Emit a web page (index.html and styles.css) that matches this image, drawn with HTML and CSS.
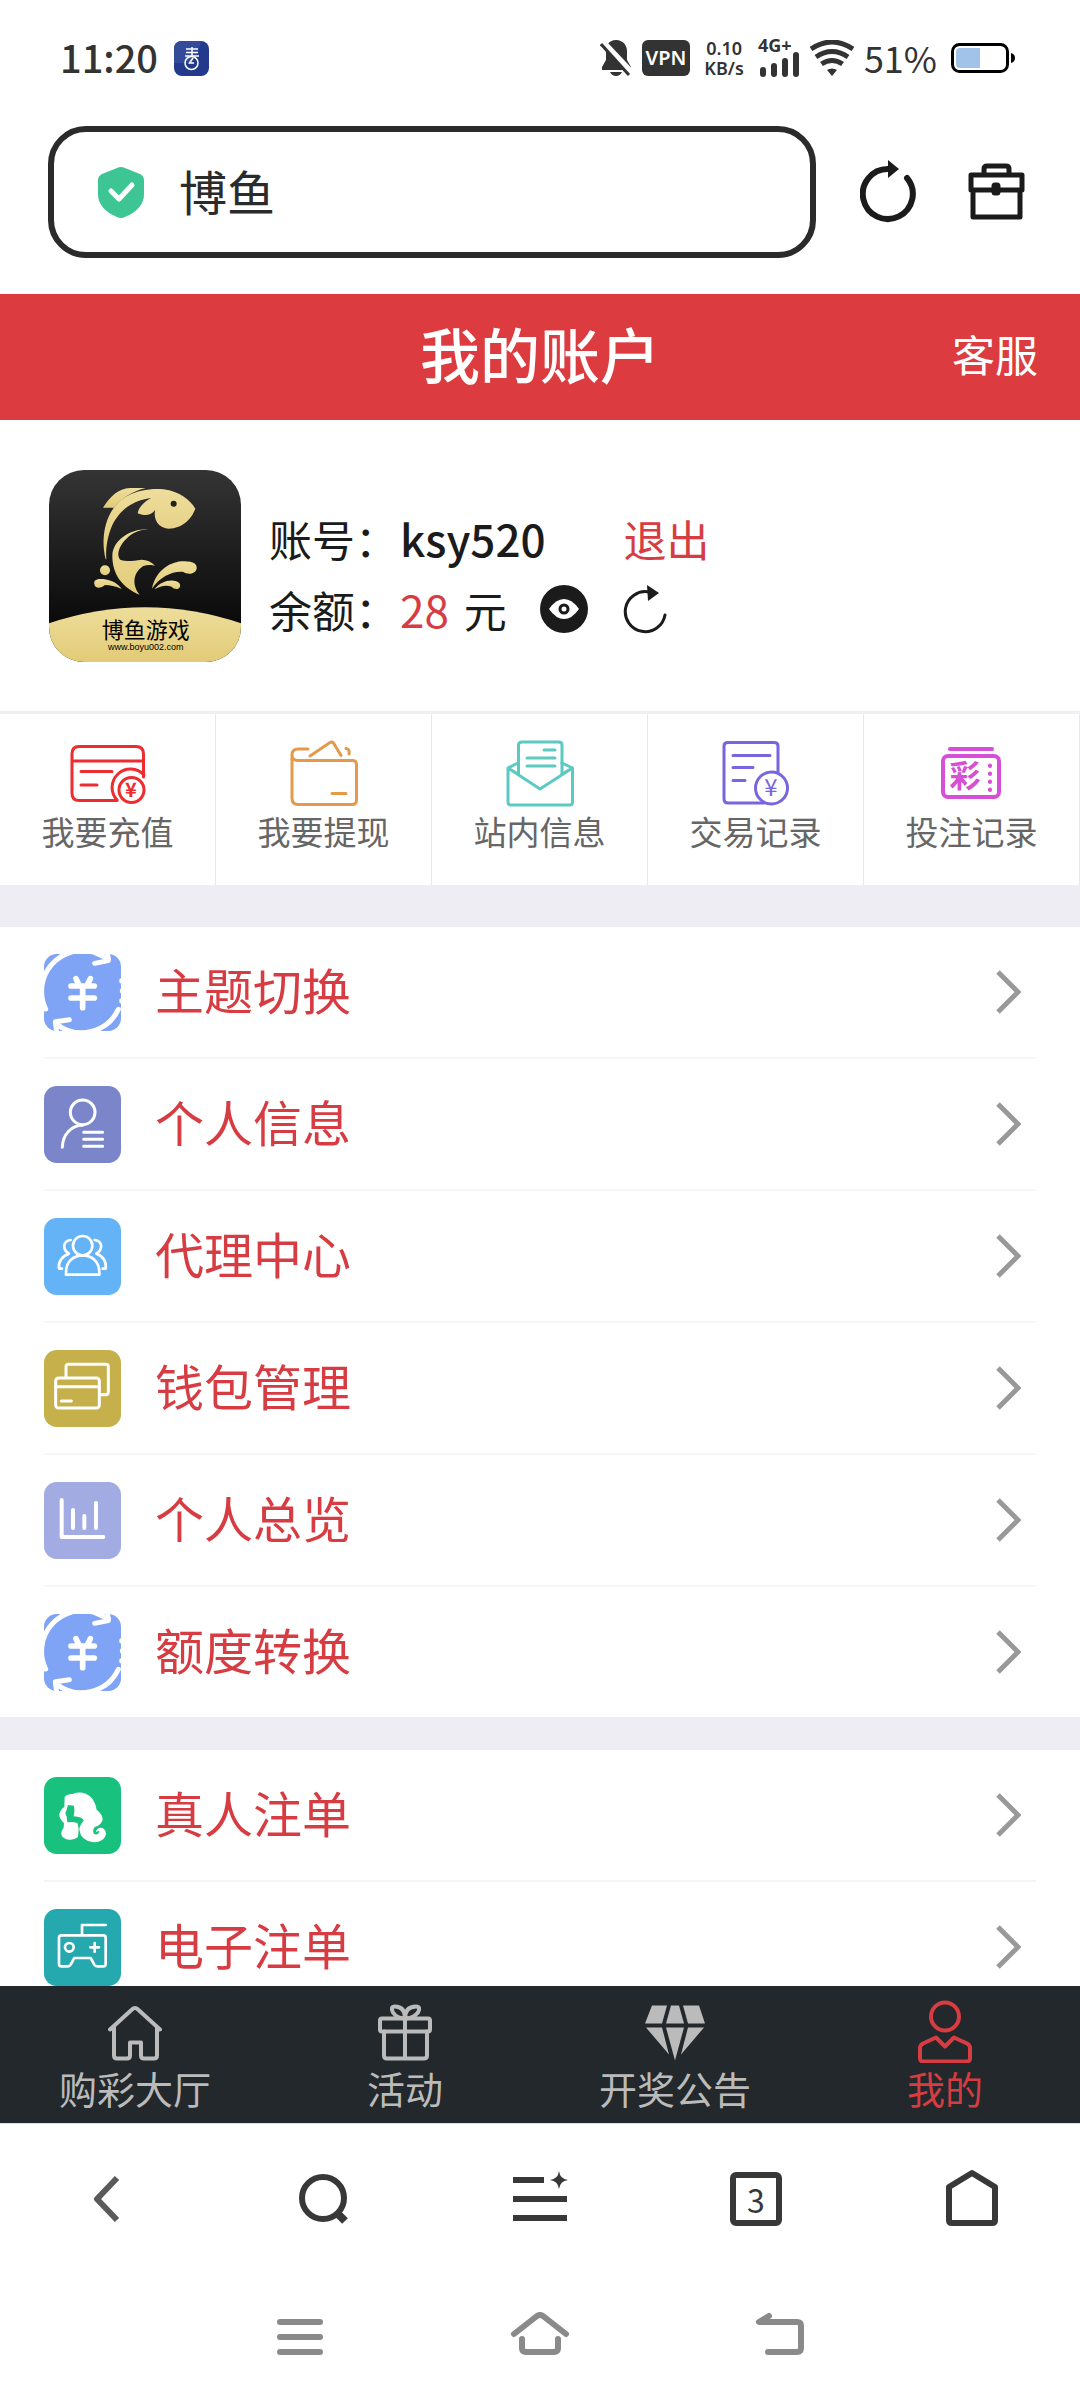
FILE: index.html
```html
<!DOCTYPE html>
<html lang="zh-CN">
<head>
    <meta charset="UTF-8">
    <meta name="viewport" content="width=device-width, initial-scale=1.0">
    <title>我的账户</title>
    <link rel="stylesheet" href="styles.css">
</head>
<body>
    <div class="status-bar">
        <span class="clock">11:20</span>
        <svg class="app-badge" viewBox="0 0 35 35">
            <rect width="35" height="35" rx="8" fill="#233a8c"/>
            <path d="M0 22V8Q0 0 8 0H27L24 12L17 22Z" fill="#334b98"/>
            <path d="M12 8H24M12 11.500H24M11 15H25M18 6V15" stroke="#fff" stroke-width="1.500"/>
            <circle cx="17.500" cy="22" r="6.500" fill="none" stroke="#fff" stroke-width="1.500"/>
            <path d="M19 17L15.500 22H20" fill="none" stroke="#fff" stroke-width="1.500"/>
        </svg>
        <div class="status-icons">
            <svg class="bell" viewBox="0 0 32 36" fill="#333">
                <path d="M16 0C23 0 27 5 27 11V20L31 27V30H2V27L6 20V11C6 5 9 0 16 0Z"/>
                <path d="M10 32H22Q20 36 16 36Q12 36 10 32Z"/>
                <path d="M2 1L32 33" stroke="#fff" stroke-width="6"/>
                <path d="M1 4L29 35" stroke="#333" stroke-width="3"/>
            </svg>
            <span class="vpn">VPN</span>
            <span class="speed">
                <span>0.10</span>
                <span>KB/s</span>
            </span>
            <span class="signal">
                <span>4G+</span>
                <svg viewBox="0 0 42 26" stroke="#333" stroke-width="6" stroke-linecap="round">
                    <path d="M5 19V23M16 15V23M27 10V23M38 4V23"/>
                </svg>
            </span>
            <svg class="wifi" viewBox="0 0 44 36" fill="none" stroke="#333" stroke-width="5">
                <path d="M1 9Q22 -5 43 9M6 17Q22 6 38 17M11.500 24Q22 17 32.500 24"/>
                <path d="M17 30Q22 27 27 30L22 36Z" fill="#333" stroke="none"/>
            </svg>
            <span class="percent">51%</span>
            <svg class="battery" viewBox="0 0 65 32">
                <rect x="1.500" y="2.500" width="55" height="27" rx="7" fill="#fff" stroke="#000" stroke-width="3"/>
                <path d="M9 6H29V26H9Q5 26 5 22V10Q5 6 9 6Z" fill="#a2c3e9"/>
                <path d="M60 11Q64 12 64 16Q64 20 60 21Z"/>
            </svg>
        </div>
    </div>

    <div class="address-bar">
        <div class="address-box">
            <svg class="shield" viewBox="0 0 46 52">
                <path d="M19 2Q23 0 27 2L42 8Q46 10 46 14V28Q46 43 27 51Q23 53 19 51Q0 43 0 28V14Q0 10 4 8Z" fill="#3dc593"/>
                <path d="M13 25L21 33L34 19" fill="none" stroke="#fff" stroke-width="5" stroke-linecap="round" stroke-linejoin="round"/>
            </svg>
            <input class="address-input" type="text" value="博鱼" aria-label="地址栏">
        </div>
        <button class="icon-btn" aria-label="刷新">
            <svg width="56" height="64" viewBox="0 0 56 64">
                <path d="M28 9A25 25 0 1 0 47 18" fill="none" stroke="#1b1b1b" stroke-width="6" stroke-linecap="round"/>
                <path d="M28 0L39 9L28 18Z" fill="#1b1b1b"/>
            </svg>
        </button>
        <button class="icon-btn" aria-label="工具箱">
            <svg width="58" height="60" viewBox="0 0 58 60" fill="none" stroke="#1b1b1b" stroke-width="5" stroke-linejoin="round">
                <path d="M16 12V7Q16 4 19 4H38Q41 4 41 7V12M3 28V13H54V28ZM5 28V55H52V28"/>
                <rect x="26" y="23" width="4" height="8" rx="1"/>
            </svg>
        </button>
    </div>

    <header class="page-header">
        <h1>我的账户</h1>
        <a href="#service">客服</a>
    </header>

    <main>
        <section class="profile">
            <svg class="avatar" viewBox="57 30 576 576">
                <defs>
                    <linearGradient id="dark" x1="0" y1="0" x2="0" y2="1">
                        <stop offset="0" stop-color="#343434"/>
                        <stop offset="0.800" stop-color="#0a0a0a"/>
                    </linearGradient>
                    <linearGradient id="gold" x1="0" y1="0" x2="0" y2="1">
                        <stop offset="0" stop-color="#eedd9c"/>
                        <stop offset="1" stop-color="#e2cb77"/>
                    </linearGradient>
                    <clipPath id="avatar-clip"><rect x="57" y="30" width="576" height="576" rx="105"/></clipPath>
                </defs>
                <g clip-path="url(#avatar-clip)">
                    <rect x="57" y="30" width="576" height="576" fill="url(#dark)"/>
                    <path d="M57 490Q346 394 633 490V606H57Z" fill="url(#gold)"/>
                    <g fill="url(#gold)">
                        <path d="M219 143C240 110 265 85 300 84H347C310 92 275 115 252 143Z"/>
                        <path d="M227 298C210 225 228 150 285 112C325 88 370 85 400 88C450 94 480 120 496 146C485 175 460 205 415 206C385 203 370 180 375 150C365 165 345 170 323 160C325 145 340 125 364 114C310 120 265 150 243 205C230 240 227 270 229 298Z"/>
                        <path d="M355 208C300 206 250 240 247 285C246 345 280 385 329 404C308 380 305 340 340 318C355 313 368 316 375 317C365 305 350 299 335 299C310 302 290 306 272 300C255 285 270 245 310 220C325 212 340 209 355 208Z"/>
                        <circle cx="225" cy="331" r="15"/>
                        <path d="M193 372C190 358 205 355 225 358C250 362 268 375 275 387C255 378 240 375 225 375C215 384 195 388 193 372Z"/>
                        <path d="M366 386C375 340 410 308 455 304C490 302 502 312 500 326C496 342 475 345 460 336C430 332 390 350 366 386Z"/>
                        <path d="M373 388C390 368 410 360 430 362C448 364 452 372 450 380C446 390 432 388 425 380C405 374 390 380 373 388Z"/>
                    </g>
                    <circle cx="431" cy="131" r="9" fill="#222"/>
                    <text class="logo-name" x="347" y="534">博鱼游戏</text>
                    <text class="logo-url" x="347" y="569">www.boyu002.com</text>
                </g>
            </svg>
            <div class="account">
                <div class="account-row">
                    <span class="account-label">账号：</span>
                    <span class="account-name">ksy520</span>
                    <a class="logout" href="#logout">退出</a>
                </div>
                <div class="account-row">
                    <span class="account-label">余额：</span>
                    <span class="balance">28</span>
                    <span class="unit">元</span>
                    <button class="icon-btn eye" aria-label="显示余额">
                        <svg width="50" height="50" viewBox="0 0 50 50">
                            <circle cx="25" cy="25" r="24" fill="#1b1b1b"/>
                            <path d="M10 25Q17 15 25 15Q33 15 40 25Q33 35 25 35Q17 35 10 25Z" fill="#fff"/>
                            <circle cx="25" cy="25" r="4" fill="#fff" stroke="#1b1b1b" stroke-width="3"/>
                        </svg>
                    </button>
                    <button class="icon-btn" aria-label="刷新余额">
                        <svg width="44" height="50" viewBox="0 0 44 50">
                            <path d="M26 8A20 20 0 1 0 42 31" fill="none" stroke="#1b1b1b" stroke-width="3" stroke-linecap="round"/>
                            <path d="M24 1L36 9L25 17Z" fill="#1b1b1b"/>
                        </svg>
                    </button>
                </div>
            </div>
        </section>

        <nav class="quick-nav">
            <a href="#recharge">
                <svg viewBox="0 0 76 72" fill="none" stroke="#ee2b2e" stroke-width="3" stroke-linecap="round">
                    <path d="M73.500 39V16Q73.500 8.500 66 8.500H9Q2 8.500 2 16V55Q2 62.500 9 62.500H47M2 23H73M11 33.500H42M11 47H27"/>
                    <path d="M47 62A18 18 0 0 1 74 37"/>
                    <circle cx="61.500" cy="52" r="12.500"/>
                    <text class="coin coin-red" x="61" y="59">¥</text>
                </svg>
                <span>我要充值</span>
            </a>
            <a href="#withdraw">
                <svg viewBox="0 0 76 72" fill="none" stroke="#e59a4b" stroke-width="3" stroke-linecap="round" stroke-linejoin="round">
                    <path d="M22 11H12Q6 11 6 17Q6 22.500 12 22.500H67Q70.500 22.500 70.500 27V62Q70.500 66.500 66 66.500H12Q6 66.500 6 60V17"/>
                    <path d="M24 18L44 4.500Q46 3.500 47.500 5L55 17.500M60 10.500Q64 11 63 16M46 55.500H60"/>
                </svg>
                <span>我要提现</span>
            </a>
            <a href="#message">
                <svg viewBox="0 0 76 72" fill="none" stroke="#5cc9c2" stroke-width="3" stroke-linecap="round" stroke-linejoin="round">
                    <path d="M16.500 36V7Q16.500 4 20 4H57Q60 4 60 7V36M42 12H53M25 20H53M25 28H53"/>
                    <path d="M16 25L6 30V64Q6 67 9 67H68Q70.500 67 70.500 64V30L60 25M6 30L38 51L70.500 30M6 30L16 36M70.500 30L60 36"/>
                </svg>
                <span>站内信息</span>
            </a>
            <a href="#trades">
                <svg viewBox="0 0 76 72" fill="none" stroke="#7965de" stroke-width="3" stroke-linecap="round">
                    <path d="M60 34V8Q60 4.500 56 4.500H10Q6 4.500 6 8V61Q6 65 10 65H46M15 17.500H52M15 29.500H35M15 42.500H27"/>
                    <circle cx="53.500" cy="50" r="16"/>
                    <text class="coin coin-purple" x="53" y="58">¥</text>
                </svg>
                <span>交易记录</span>
            </a>
            <a href="#bets">
                <svg viewBox="0 0 76 72" fill="none" stroke="#d64fd6" stroke-width="4" stroke-linecap="round">
                    <path d="M16 11H58"/>
                    <rect x="9" y="18" width="56" height="41" rx="5"/>
                    <path d="M56 27.500V28M56 35.500V36M56 43.500V44M56 51.500V52"/>
                    <text class="ticket" x="31" y="49">彩</text>
                </svg>
                <span>投注记录</span>
            </a>
        </nav>

        <ul class="menu">
            <li><a href="#theme">
                <svg class="menu-icon" viewBox="0 0 231 231">
                    <defs><clipPath id="tile"><rect width="231" height="231" rx="38"/></clipPath></defs>
                    <g id="exchange" clip-path="url(#tile)">
                        <rect width="231" height="231" fill="#7fa3f5"/>
                        <g fill="none" stroke="#fff" stroke-width="15" stroke-linecap="round" stroke-linejoin="round">
                            <path d="M5 165A122 122 0 0 1 150 -5L193 14"/>
                            <path d="M152 28L193 20L190 -10"/>
                            <path d="M223 166A122 122 0 0 1 40 212"/>
                            <path d="M76 197L34 203L38 236"/>
                            <path d="M233 80V81M235 110V111M233 140V141"/>
                        </g>
                        <path d="M96 74L105 93M139 74L130 93M81 96H151M81 132H151M116 98V161" fill="none" stroke="#fff" stroke-width="17" stroke-linecap="round"/>
                    </g>
                </svg>
                <span>主题切换</span>
                <svg class="chevron" viewBox="0 0 26 46"><path d="M3 3L23 23L3 43"/></svg>
            </a></li>
            <li><a href="#info">
                <svg class="menu-icon" viewBox="0 0 231 231">
                    <rect width="231" height="231" rx="38" fill="#7a86c9"/>
                    <g fill="none" stroke="#fff" stroke-width="9" stroke-linecap="round">
                        <circle cx="116" cy="79" r="37"/>
                        <path d="M55 184C56 145 82 118 116 118M119 139H176M119 160H176M119 181H176"/>
                    </g>
                </svg>
                <span>个人信息</span>
                <svg class="chevron" viewBox="0 0 26 46"><path d="M3 3L23 23L3 43"/></svg>
            </a></li>
            <li><a href="#agent">
                <svg class="menu-icon" viewBox="0 0 231 231">
                    <rect width="231" height="231" rx="38" fill="#64b3f7"/>
                    <g fill="none" stroke="#fff" stroke-width="8" stroke-linecap="round" stroke-linejoin="round">
                        <circle cx="116" cy="83" r="29"/>
                        <path d="M66 170V163C66 95 166 95 166 163V170Z"/>
                        <path d="M80 66C56 70 54 94 75 107C54 114 42 132 45 152H54"/>
                        <path d="M152 66C176 70 178 94 157 107C178 114 188 132 185 152H176"/>
                    </g>
                </svg>
                <span>代理中心</span>
                <svg class="chevron" viewBox="0 0 26 46"><path d="M3 3L23 23L3 43"/></svg>
            </a></li>
            <li><a href="#wallet">
                <svg class="menu-icon" viewBox="0 0 231 231">
                    <rect width="231" height="231" rx="38" fill="#c5b04b"/>
                    <g fill="none" stroke="#fff" stroke-width="9" stroke-linecap="round">
                        <rect x="35" y="84" width="131" height="90" rx="9"/>
                        <path d="M35 110H166M52 153H82"/>
                        <path d="M66 82V51Q66 43 74 43H186Q193 43 193 51V126Q193 134 186 134H170"/>
                    </g>
                </svg>
                <span>钱包管理</span>
                <svg class="chevron" viewBox="0 0 26 46"><path d="M3 3L23 23L3 43"/></svg>
            </a></li>
            <li><a href="#overview">
                <svg class="menu-icon" viewBox="0 0 231 231">
                    <rect width="231" height="231" rx="38" fill="#a2abe2"/>
                    <path d="M53 54V165H178M87 84V138M121 102V138M156 63V138" fill="none" stroke="#fff" stroke-width="12" stroke-linecap="round" stroke-linejoin="round"/>
                </svg>
                <span>个人总览</span>
                <svg class="chevron" viewBox="0 0 26 46"><path d="M3 3L23 23L3 43"/></svg>
            </a></li>
            <li><a href="#transfer">
                <svg class="menu-icon" viewBox="0 0 231 231"><use href="#exchange"/></svg>
                <span>额度转换</span>
                <svg class="chevron" viewBox="0 0 26 46"><path d="M3 3L23 23L3 43"/></svg>
            </a></li>
        </ul>

        <ul class="menu">
            <li><a href="#live">
                <svg class="menu-icon" viewBox="0 0 231 231">
                    <rect width="231" height="231" rx="38" fill="#18c17e"/>
                    <path d="M62 60Q66 52 86 51Q105 43 125 50Q152 60 158 98Q176 112 176 128Q172 144 152 150Q144 160 150 171Q164 176 166 163Q160 160 155 167Q158 150 176 153Q190 162 184 178Q175 196 148 196Q110 190 106 158Q106 145 119 131Q115 119 89 118Q93 100 90 86L72 84Q68 100 64 108Q70 120 70 136Q88 134 100 138Q106 150 102 180Q90 190 75 188Q52 184 52 170Q52 160 59 152L60 138Q44 124 46 112Q50 96 61 90Z" fill="#fff"/>
                </svg>
                <span>真人注单</span>
                <svg class="chevron" viewBox="0 0 26 46"><path d="M3 3L23 23L3 43"/></svg>
            </a></li>
            <li><a href="#slots">
                <svg class="menu-icon" viewBox="0 0 231 231">
                    <rect width="231" height="231" rx="38" fill="#25a9af"/>
                    <g fill="none" stroke="#fff" stroke-width="8" stroke-linecap="round" stroke-linejoin="round">
                        <path d="M114 77V48H185M52 79H178Q185 79 185 86V165Q185 172 178 172H160Q154 172 151 167L140 147H91L80 167Q77 172 72 172H52Q45 172 45 165V86Q45 79 52 79Z"/>
                        <circle cx="76" cy="115" r="13"/>
                        <path d="M139 115H165M152 102V128"/>
                    </g>
                </svg>
                <span>电子注单</span>
                <svg class="chevron" viewBox="0 0 26 46"><path d="M3 3L23 23L3 43"/></svg>
            </a></li>
        </ul>
    </main>

    <nav class="tab-bar">
        <a href="#lobby">
            <svg viewBox="0 0 64 64">
                <path d="M7 31L29 11Q32 8 35 11L57 31M11 29V57Q11 60 14 60H24Q27 60 27 57V44H38V57Q38 60 41 60H51Q54 60 54 57V29"/>
            </svg>
            <span>购彩大厅</span>
        </a>
        <a href="#activity">
            <svg viewBox="0 0 64 64">
                <rect x="7" y="20" width="50" height="13" rx="2"/>
                <path d="M11 33V57Q11 60 14 60H51Q54 60 54 57V33M32 20V60"/>
                <path d="M32 20Q32 8 22 8Q17 8 20 14Q24 20 32 20Q40 20 45 14Q48 8 43 8Q32 8 32 20"/>
            </svg>
            <span>活动</span>
        </a>
        <a href="#results">
            <svg class="solid" viewBox="0 0 64 64">
                <path d="M9 7H24L19 25H2ZM28 7H36L41 25H23ZM40 7H56L62 25H45ZM3 29H19L26 56ZM23 29H41L32 62ZM45 29H61L38 56Z"/>
            </svg>
            <span>开奖公告</span>
        </a>
        <a class="active" href="#mine">
            <svg viewBox="0 0 64 64">
                <circle cx="32" cy="18" r="14"/>
                <path d="M23 39L10 45Q7 47 7 49V60Q7 63 10 63H54Q57 63 57 60V49Q57 47 54 45L41 39L32 48Z"/>
            </svg>
            <span>我的</span>
        </a>
    </nav>

    <div class="browser-bar">
        <button aria-label="后退">
            <svg class="back" width="60" height="60" viewBox="0 0 60 60"><path d="M39 9L19 30L39 51"/></svg>
        </button>
        <button aria-label="搜索">
            <svg width="60" height="60" viewBox="0 0 60 60"><circle cx="29" cy="29" r="21"/><path d="M44 45L51 52" stroke-width="8"/></svg>
        </button>
        <button aria-label="菜单">
            <svg width="60" height="60" viewBox="0 0 60 60"><path d="M3 11H34M3 30H57M3 49H57"/><path d="M49 2Q50 10 58 11Q50 12 49 20Q48 12 40 11Q48 10 49 2Z" fill="#383838" stroke="none"/></svg>
        </button>
        <button class="tabs-btn" aria-label="标签页">3</button>
        <button aria-label="主页">
            <svg width="60" height="60" viewBox="0 0 60 60"><path d="M7 18L30 4L53 18V51Q53 54 50 54H10Q7 54 7 51Z"/></svg>
        </button>
    </div>

    <div class="system-bar">
        <button aria-label="最近任务">
            <svg width="60" height="50" viewBox="0 0 60 50"><path d="M10 10H50M10 25H50M10 40H50"/></svg>
        </button>
        <button aria-label="桌面">
            <svg width="60" height="50" viewBox="0 0 60 50"><path d="M4 22L27 4Q30 2 33 4L56 22M12 27V36Q12 40 16 40H44Q48 40 48 36V27"/></svg>
        </button>
        <button aria-label="返回">
            <svg width="60" height="50" viewBox="0 0 60 50"><path d="M19 4L9 10H47Q51 10 51 14V36Q51 40 47 40H18"/></svg>
        </button>
    </div>
</body>
</html>
```

FILE: styles.css
```css
* {
    box-sizing: border-box;
}
body {
    display: flex;
    flex-direction: column;
    height: 100vh;
    margin: 0;
    background-color: #fff;
    color: #1b1b1b;
    font-family: "Noto Sans CJK SC", "Noto Sans", sans-serif;
}
a {
    color: inherit;
    text-decoration: none;
}
button {
    padding: 0;
    border: none;
    background: none;
    color: inherit;
    font-family: inherit;
    cursor: pointer;
}
svg {
    display: block;
    flex-shrink: 0;
}

/* phone status bar */
.status-bar {
    display: flex;
    align-items: center;
    flex-shrink: 0;
    height: 116px;
    padding: 0 64px 0 60px;
    color: #333;
}
.clock {
    padding-bottom: 4px;
    font-size: 38px;
    font-weight: 500;
}
.app-badge {
    width: 35px;
    height: 35px;
    margin-left: 16px;
}
.status-icons {
    display: flex;
    align-items: center;
    gap: 10px;
    margin-left: auto;
}
.bell {
    width: 32px;
    height: 36px;
}
.vpn {
    padding: 0 4px;
    border-radius: 6px;
    background-color: #333;
    color: #fff;
    font-family: "Noto Sans", sans-serif;
    font-size: 20px;
    font-weight: 600;
    line-height: 36px;
}
.speed {
    display: flex;
    flex-direction: column;
    align-items: center;
    margin: 0 4px;
    font-family: "Noto Sans", sans-serif;
    font-size: 18px;
    font-weight: 600;
    line-height: 20px;
}
.signal {
    width: 42px;
    font-family: "Noto Sans", sans-serif;
    font-size: 18px;
    font-weight: 700;
    line-height: 12px;
}
.signal svg {
    width: 42px;
    height: 26px;
}
.wifi {
    width: 44px;
    height: 36px;
}
.percent {
    padding-bottom: 2px;
    font-size: 36px;
    line-height: 40px;
}
.battery {
    width: 65px;
    height: 32px;
    margin-left: 4px;
}

/* address bar */
.address-bar {
    display: flex;
    align-items: center;
    flex-shrink: 0;
    padding: 10px 54px 36px 48px;
}
.address-box {
    display: flex;
    flex: 1;
    align-items: center;
    height: 132px;
    margin-right: 44px;
    padding: 0 44px;
    border: 6px solid #2b2b2b;
    border-radius: 38px;
}
.shield {
    width: 46px;
    height: 52px;
}
.address-input {
    flex: 1;
    min-width: 0;
    margin-left: 35px;
    padding: 0 0 4px;
    border: none;
    outline: none;
    background: none;
    color: #2b2b2b;
    font-family: inherit;
    font-size: 48px;
}
.address-bar .icon-btn + .icon-btn {
    margin-left: 52px;
}

/* page header */
.page-header {
    display: grid;
    grid-template-columns: 1fr auto 1fr;
    align-items: center;
    flex-shrink: 0;
    height: 126px;
    padding: 0 42px 8px;
    background-color: #dc3b40;
    color: #fff;
}
.page-header h1 {
    grid-column: 2;
    margin: 0;
    font-size: 60px;
    font-weight: 500;
    line-height: 80px;
}
.page-header a {
    justify-self: end;
    font-size: 43px;
    line-height: 60px;
}
main {
    flex: 1;
    min-height: 0;
    overflow-y: auto;
    scrollbar-width: none;
    background-color: #eeedf3;
}

/* profile */
.profile {
    display: flex;
    align-items: center;
    padding: 50px 49px 49px;
    background-color: #fff;
}
.avatar {
    width: 192px;
    height: 192px;
}
.logo-name {
    font-size: 66px;
    text-anchor: middle;
}
.logo-url {
    font-family: "Liberation Sans", sans-serif;
    font-size: 27px;
    text-anchor: middle;
}
.account {
    margin-left: 28px;
    padding-top: 14px;
}
.account-row {
    display: flex;
    align-items: center;
    height: 71px;
    font-size: 44px;
}
.account-label {
    width: 131px;
    font-size: 43px;
}
.account-name {
    font-weight: 500;
}
.logout {
    margin-left: 78px;
    color: #d63c42;
    font-size: 43px;
}
.balance {
    margin-right: 15px;
    color: #d63c42;
}
.unit {
    font-size: 43px;
}
.eye {
    margin: 0 34px 0 32px;
}

/* quick links */
.quick-nav {
    display: grid;
    grid-template-columns: repeat(5, 1fr);
    border-top: 3px solid #f0f0f4;
    background-color: #fff;
}
.quick-nav a {
    display: flex;
    flex-direction: column;
    align-items: center;
    padding: 24px 0 32px;
    border-right: 1px solid #e8e8ec;
    color: #666;
    font-size: 33px;
    line-height: 43px;
}
.quick-nav svg {
    width: 76px;
    height: 72px;
}
.coin {
    font-weight: 700;
    text-anchor: middle;
    stroke: none;
}
.coin-red {
    fill: #ee2b2e;
    font-size: 20px;
}
.coin-purple {
    fill: #7965de;
    font-size: 24px;
    font-weight: 400;
}
.ticket {
    fill: #d64fd6;
    font-size: 31px;
    font-weight: 700;
    text-anchor: middle;
    stroke: none;
}

/* menu lists */
.menu {
    margin: 42px 0 33px;
    padding: 0 44px;
    background-color: #fff;
    list-style: none;
}
.menu + .menu {
    margin: 0;
}
.menu li + li {
    border-top: 2px solid #f5f5f6;
}
.menu a {
    display: flex;
    align-items: center;
    height: 130px;
    color: #d63c42;
    font-size: 49px;
}
.menu span {
    padding-bottom: 8px;
}
.menu-icon {
    width: 77px;
    height: 77px;
    margin-right: 34px;
}
.chevron {
    width: 26px;
    height: 46px;
    margin: 0 15px 0 auto;
    fill: none;
    stroke: #999;
    stroke-width: 5;
}

/* site tab bar */
.tab-bar {
    display: grid;
    grid-template-columns: repeat(4, 1fr);
    flex-shrink: 0;
    border-bottom: 1px solid #ddd;
    background-color: #22282b;
    color: #bbb;
}
.tab-bar a {
    display: flex;
    flex-direction: column;
    align-items: center;
    padding: 12px 0 10px;
    font-size: 38px;
    line-height: 50px;
}
.tab-bar svg {
    width: 64px;
    height: 65px;
    fill: none;
    stroke: currentColor;
    stroke-width: 4;
    stroke-linecap: round;
    stroke-linejoin: round;
}
.tab-bar .solid {
    fill: currentColor;
    stroke: none;
}
.tab-bar .active {
    color: #d63c42;
}

/* browser toolbar */
.browser-bar {
    display: grid;
    grid-template-columns: repeat(5, 1fr);
    align-items: center;
    justify-items: center;
    flex-shrink: 0;
    height: 150px;
}
.browser-bar svg {
    fill: none;
    stroke: #383838;
    stroke-width: 6;
    stroke-linejoin: round;
}
.browser-bar .back {
    stroke: #5a5a5a;
}
.tabs-btn {
    width: 52px;
    height: 54px;
    border: 6px solid #383838;
    border-radius: 6px;
    color: #383838;
    font-size: 32px;
    line-height: 40px;
}

/* android navigation */
.system-bar {
    display: flex;
    align-items: center;
    justify-content: center;
    gap: 180px;
    flex-shrink: 0;
    height: 126px;
}
.system-bar svg {
    fill: none;
    stroke: #8a8a8a;
    stroke-width: 6;
    stroke-linecap: round;
    stroke-linejoin: round;
}
```
